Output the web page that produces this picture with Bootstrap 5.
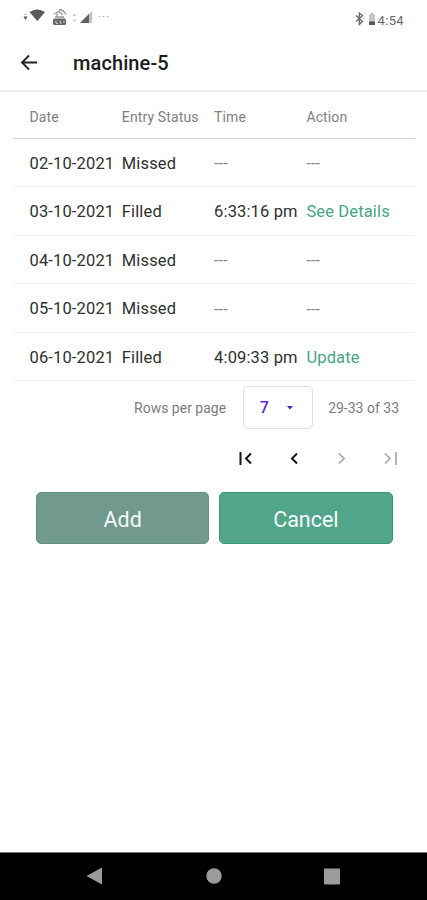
<!DOCTYPE html>
<html lang="en">
<head>
<meta charset="utf-8">
<meta name="viewport" content="width=device-width, initial-scale=1">
<title>machine-5</title>
<link href="https://cdn.jsdelivr.net/npm/bootstrap@5.3.0/dist/css/bootstrap.min.css" rel="stylesheet">
<style>
body{font-family:Roboto,"Liberation Sans",sans-serif;color:#303030;background:#fff}
svg{display:block;flex:none}
.screen{height:900px;overflow:hidden}
.status-bar{height:36px;padding:0 23px 0 22px}
.clock{font-size:13px;line-height:16px;color:#666;letter-spacing:.35px;margin-top:5px}
.app-bar{height:56px;padding:0 19px 2px;border-bottom:2px solid #ededed}
.app-title{font-size:20px;line-height:24px;font-weight:500;color:#1c1c1c;margin-left:34px;padding-top:1px;letter-spacing:.1px}
.entries{margin:0 12px 0 13px}
.entry-row{display:grid;grid-template-columns:repeat(4,92.3px);align-items:center;padding:3.4px 0 0 16.5px;height:48.4px;border-bottom:1px solid #efefef;font-size:16.5px;letter-spacing:.14px;white-space:nowrap}
.entry-head{height:47px;border-bottom-color:#d8d8d8;font-size:14px;letter-spacing:.13px;color:#808080;padding-top:4px}
.dashes{font-size:16px;color:#858585;letter-spacing:.1px}
.green{color:#46a583;text-decoration:none}
.pager{height:55px;font-size:14px;color:#7c7c7c;padding:0 28px 1px 0}
.pager>span{padding-top:2px}
.rows-select{width:70px;height:43px;border:1px solid #dedede;border-radius:5px;color:#5a2be0;background:#fff;font-size:16px;font-weight:500;padding:1px 15px 0 16px;margin:0 15.500px 0 16.500px}
.page-nav{height:44px;padding-right:28px}
.actions{padding:12.400px 34.500px 0 36px;gap:10px}
.action-btn{flex:1 1 0;height:52px;padding:1px 0 0;border:1px solid #339873;border-radius:5px;background:#50a58b;color:#f4fbf8;font-size:21.5px;line-height:52px}
.action-btn.muted{background:#72998e;border-color:#5f9381}
.nav-keys{height:48px;background:#000;border-top:1px solid #777}
</style>
<script src="https://cdn.jsdelivr.net/npm/bootstrap@5.3.0/dist/js/bootstrap.bundle.min.js"></script>
</head>
<body>
<div class="screen d-flex flex-column">
  <div class="status-bar d-flex justify-content-between align-items-center">
    <svg width="90" height="24" viewBox="22 6 90 24">
      <path d="M23.500 16.500h4L25.500 20z" fill="#555"/><path d="M24.500 14.500h2" stroke="#aaa"/>
      <path d="M29.500 12q7.500-5 15.500 0L37.300 21z" fill="#5a5a5a"/>
      <path d="M59 9.500q5 .5 7 5M58.500 12q3 .5 4 3M54 14l6-3M55 17h9M57 13.500v3" stroke="#999" fill="none" stroke-width="1.300"/>
      <rect x="53" y="18.500" width="13" height="6.500" rx="1.500" fill="#666"/><path d="M56 20.500v3h2M60 20.500v2.500h2M64 20.500v2.500" stroke="#ccc" fill="none"/>
      <path d="M72.500 16l2-2.500 2 2.500zM72.500 19.500l2 2.500 2-2.500z" fill="#ccc"/>
      <path d="M80 23L92 11v12z" fill="#c4c4c4"/><path d="M80 23l9-9v9z" fill="#606060"/>
      <path d="M98.500 16.500h2m2 0h2m2 0h2" stroke="#bbb" stroke-width="1.200"/>
    </svg>
    <div class="d-flex align-items-center">
      <svg width="24" height="24" viewBox="353 6 24 24">
        <path d="M355 15.500l6.500 6-3.200 3V13l3.200 2.500-6.500 6" fill="none" stroke="#666" stroke-width="1.300"/><path d="M363 17.500v2" stroke="#aaa"/>
        <path d="M368 14.500h1.500V13h3v1.500h1.500V25h-6z" fill="#c6c6c6"/><path d="M368 21.500h6V25h-6z" fill="#555"/>
      </svg>
      <span class="clock">4:54</span>
    </div>
  </div>
  <header class="app-bar d-flex align-items-center">
    <svg width="20" height="20" viewBox="0 0 20 20" fill="none" stroke="#222" stroke-width="1.800"><path d="M18 10.500H3M10 3.500l-7 7 7 7"/></svg>
    <h1 class="app-title mb-0">machine-5</h1>
  </header>
  <main class="flex-grow-1">
    <div class="entries">
      <div class="entry-row entry-head"><span>Date</span><span>Entry Status</span><span>Time</span><span>Action</span></div>
      <div class="entry-row"><span>02-10-2021</span><span>Missed</span><span class="dashes">---</span><span class="dashes">---</span></div>
      <div class="entry-row"><span>03-10-2021</span><span>Filled</span><span>6:33:16 pm</span><a href="#" class="green">See Details</a></div>
      <div class="entry-row"><span>04-10-2021</span><span>Missed</span><span class="dashes">---</span><span class="dashes">---</span></div>
      <div class="entry-row"><span>05-10-2021</span><span>Missed</span><span class="dashes">---</span><span class="dashes">---</span></div>
      <div class="entry-row"><span>06-10-2021</span><span>Filled</span><span>4:09:33 pm</span><a href="#" class="green">Update</a></div>
    </div>
    <div class="pager d-flex align-items-center justify-content-end">
      <span>Rows per page</span>
      <button class="rows-select d-flex align-items-center justify-content-between"><span>7</span><svg width="12" height="6" viewBox="0 0 12 6"><path d="M2 1h6L5 4.500z" fill="#4c20d8"/></svg></button>
      <span>29-33 of 33</span>
    </div>
    <div class="page-nav d-flex align-items-center justify-content-end">
      <svg width="162" height="20" viewBox="237 448 162 20" fill="none" stroke-width="2">
        <path d="M240.500 452v13M251 453.500l-5 5 5 5M297 453.500l-5 5 5 5" stroke="#151515"/>
        <path d="M339 453.500l5 5-5 5M385 453.500l5 5-5 5M396 452v13" stroke="#a8a8a8" stroke-width="1.700"/>
      </svg>
    </div>
    <div class="actions d-flex">
      <button class="btn action-btn muted">Add</button>
      <button class="btn action-btn">Cancel</button>
    </div>
  </main>
  <footer class="nav-keys">
    <svg width="427" height="47" viewBox="0 853 427 47" fill="#9b9b9b"><path d="M86.500 876L102 867.500v17z"/><circle cx="214" cy="876" r="7.700"/><rect x="324" y="868.500" width="16" height="16" rx=".8"/></svg>
  </footer>
</div>
</body>
</html>
